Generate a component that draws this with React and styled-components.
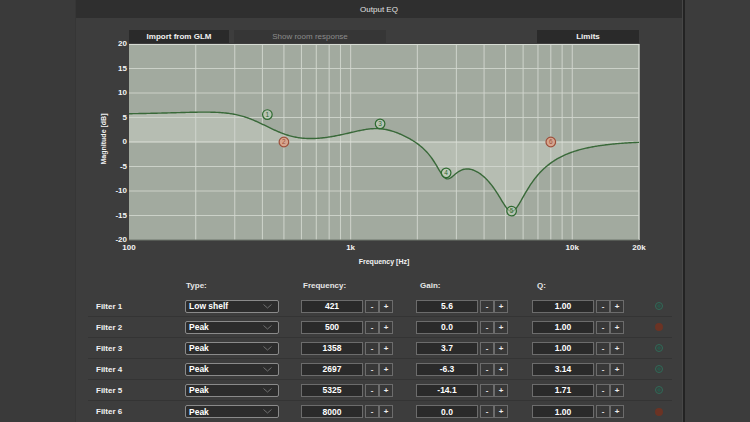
import React from 'react'
import styled, { createGlobalStyle } from 'styled-components'

const GlobalStyle = createGlobalStyle`
  html, body {
    margin: 0;
    padding: 0;
    background: #3b3b3b;
  }
  body {
    font-family: "Liberation Sans", Arial, sans-serif;
    -webkit-font-smoothing: antialiased;
  }
`

// plot geometry (svg coords, svg origin = window left / y 44)
const PX0 = 53
const PX1 = 563
const PY0 = 1
const PY1 = 197
const DECADE = (PX1 - PX0) / Math.log10(200)
const DB_PX = (PY1 - PY0) / 40
const FS = 48000

const filters = [
  { name: 'Filter 1', type: 'Low shelf', freq: 421, gain: 5.6, q: 1.0, on: true },
  { name: 'Filter 2', type: 'Peak', freq: 500, gain: 0.0, q: 1.0, on: false },
  { name: 'Filter 3', type: 'Peak', freq: 1358, gain: 3.7, q: 1.0, on: true },
  { name: 'Filter 4', type: 'Peak', freq: 2697, gain: -6.3, q: 3.14, on: true },
  { name: 'Filter 5', type: 'Peak', freq: 5325, gain: -14.1, q: 1.71, on: true },
  { name: 'Filter 6', type: 'Peak', freq: 8000, gain: 0.0, q: 1.0, on: false },
]

const xOf = (f) => PX0 + Math.log10(f / 100) * DECADE
const yOf = (db) => PY0 + (20 - db) * DB_PX

function coeffs(flt) {
  const A = Math.pow(10, flt.gain / 40)
  const w0 = (2 * Math.PI * flt.freq) / FS
  const cs = Math.cos(w0)
  const alpha = Math.sin(w0) / (2 * flt.q)
  if (flt.type === 'Low shelf') {
    const sa = 2 * Math.sqrt(A) * alpha
    return {
      b: [
        A * (A + 1 - (A - 1) * cs + sa),
        2 * A * (A - 1 - (A + 1) * cs),
        A * (A + 1 - (A - 1) * cs - sa),
      ],
      a: [A + 1 + (A - 1) * cs + sa, -2 * (A - 1 + (A + 1) * cs), A + 1 + (A - 1) * cs - sa],
    }
  }
  return {
    b: [1 + alpha * A, -2 * cs, 1 - alpha * A],
    a: [1 + alpha / A, -2 * cs, 1 - alpha / A],
  }
}

function magDb(c, f) {
  const w = (2 * Math.PI * f) / FS
  const ev = (k) => {
    const re = k[0] + k[1] * Math.cos(w) + k[2] * Math.cos(2 * w)
    const im = -(k[1] * Math.sin(w) + k[2] * Math.sin(2 * w))
    return Math.sqrt(re * re + im * im)
  }
  return 20 * Math.log10(ev(c.b) / ev(c.a))
}

function buildCurve() {
  const active = filters.filter((f) => f.on).map(coeffs)
  const pts = []
  for (let x = PX0; x <= PX1; x += 1) {
    const f = 100 * Math.pow(10, (x - PX0) / DECADE)
    const db = active.reduce((s, c) => s + magDb(c, f), 0)
    pts.push([x, yOf(db)])
  }
  return pts
}

const curve = buildCurve()
const linePath = curve.map((p, i) => `${i ? 'L' : 'M'}${p[0].toFixed(1)},${p[1].toFixed(2)}`).join(' ')
const fillPath = `${linePath} L${PX1},${yOf(0)} L${PX0},${yOf(0)} Z`

const vLines = []
;[100, 1000, 10000].forEach((d) => {
  for (let m = 1; m <= 9; m++) {
    const f = d * m
    if (f > 100 && f <= 20000) vLines.push(f)
  }
})
vLines.push(20000)

const Page = styled.div`
  display: flex;
  height: 422px;
  overflow: hidden;
`

const SidePane = styled.div`
  width: 75px;
  background: #3a3a3a;
  border-right: 1px solid #363636;
`

const RightPane = styled.div`
  flex: 1;
  background: #3c3c3c;
`

const Divider = styled.div`
  width: 1px;
  background: #474747;
  border-right: 2px solid #232323;
`

const Window = styled.div`
  width: 606px;
  display: flex;
  flex-direction: column;
  background: #3d3d3d;
`

const TitleBar = styled.div`
  height: 19px;
  background: #2f2f2f;
  color: #e2e2e2;
  font-size: 8px;
  display: flex;
  align-items: center;
  justify-content: center;
`

const ButtonBar = styled.div`
  display: flex;
  margin: 12px 0 0 53px;
  width: 510px;
  height: 13px;
`

const BarButton = styled.div`
  width: ${(p) => p.w}px;
  margin-left: ${(p) => p.ml || 0}px;
  background: ${(p) => (p.dim ? '#363636' : '#2a2a2a')};
  color: ${(p) => (p.dim ? '#8c8c8c' : '#f2f2f2')};
  font-size: 8px;
  font-weight: ${(p) => (p.dim ? 'normal' : 'bold')};
  display: flex;
  align-items: center;
  justify-content: center;
`

const Plot = styled.svg`
  display: block;
  overflow: visible;
  text {
    font-family: "Liberation Sans", Arial, sans-serif;
    font-size: 8px;
    font-weight: bold;
    fill: #f4f4f4;
  }
`

const HeadRow = styled.div`
  display: grid;
  grid-template-columns: 89px 116px 115px 116px;
  margin: 10px 0 0 12px;
  padding-left: 8px;
  height: 18px;
  align-items: start;
  padding-top: 2px;
  box-sizing: border-box;
  color: #e6e6e6;
  font-size: 8px;
  font-weight: bold;
`

const HeadCell = styled.div`
  grid-column: ${(p) => p.col};
  padding-left: ${(p) => p.pad}px;
`

const Row = styled.div`
  display: grid;
  grid-template-columns: 89px 116px 115px 116px 123px 10px;
  align-items: center;
  margin-left: 12px;
  width: 584px;
  padding-left: 8px;
  height: 21.6px;
  box-sizing: border-box;
  border-bottom: 1px solid #343434;
  &:last-child {
    border-bottom: none;
  }
`

const Label = styled.div`
  color: #f2f2f2;
  font-size: 8px;
  font-weight: bold;
`

const Select = styled.div`
  width: 94px;
  height: 13px;
  box-sizing: border-box;
  border: 1px solid #8a8a8a;
  border-radius: 2px;
  background: #2c2c2c;
  display: flex;
  align-items: center;
  justify-content: space-between;
  padding: 0 6px 0 3px;
  color: #fff;
  font-size: 8.5px;
  font-weight: bold;
`

const Group = styled.div`
  display: flex;
  align-items: center;
`

const Field = styled.div`
  width: 62px;
  height: 13px;
  box-sizing: border-box;
  border: 1px solid #6c6c6c;
  background: #2a2a2a;
  color: #fff;
  font-size: 8.5px;
  font-weight: bold;
  display: flex;
  align-items: center;
  justify-content: center;
  margin-right: 2px;
`

const Step = styled.div`
  width: 14px;
  height: 13px;
  box-sizing: border-box;
  border: 1px solid #6c6c6c;
  background: #383838;
  color: #f0f0f0;
  font-size: 8px;
  font-weight: bold;
  display: flex;
  align-items: center;
  justify-content: center;
`

const Dot = styled.div`
  width: 8px;
  height: 8px;
  border-radius: 50%;
  box-sizing: border-box;
  border: ${(p) => (p.on ? '1.5px solid #2f6b58' : 'none')};
  background: ${(p) => (p.on ? 'radial-gradient(circle, #2a5448 0 1.5px, transparent 2px)' : '#6b3324')};
`

const Chevron = () => (
  <svg width="9" height="5" viewBox="0 0 9 5">
    <path d="M0.5 0.5 L4.5 4 L8.5 0.5" fill="none" stroke="#6f6f6f" strokeWidth="1" />
  </svg>
)

function Chart() {
  const gridDb = [15, 10, 5, -5, -10, -15]
  return (
    <Plot width="606" height="226" viewBox="0 0 606 226">
      <rect x={PX0} y={PY0} width={PX1 - PX0} height={PY1 - PY0} fill="#a2aa9f" />
      <path d={fillPath} fill="#bcc3b8" opacity="0.75" />
      {vLines.map((f) => (
        <line key={f} x1={xOf(f)} x2={xOf(f)} y1={PY0} y2={PY1} stroke="#d3d8d0" strokeWidth="1.1" opacity="0.85" />
      ))}
      {gridDb.map((d) => (
        <line key={d} x1={PX0} x2={PX1} y1={yOf(d)} y2={yOf(d)} stroke="#d3d8d0" strokeWidth="1.1" opacity="0.85" />
      ))}
      <line x1={PX0} x2={PX1} y1={yOf(0)} y2={yOf(0)} stroke="#dde2da" strokeWidth="1.2" />
      <line x1={PX0} x2={PX1} y1={PY0 + 0.5} y2={PY0 + 0.5} stroke="#d6dbd3" strokeWidth="1" />
      <line x1={PX0} x2={PX1} y1={PY1} y2={PY1} stroke="#6f766c" strokeWidth="1" />
      <path d={linePath} fill="none" stroke="#396939" strokeWidth="1.4" />
      {filters.map((f, i) => {
        const cx = xOf(f.freq)
        const cy = yOf(f.gain)
        return (
          <g key={f.name}>
            <circle
              cx={cx}
              cy={cy}
              r="4.8"
              fill={f.on ? 'rgba(200,215,195,0.55)' : '#d7a58e'}
              stroke={f.on ? '#2e6a30' : '#9c4f3b'}
              strokeWidth="1.2"
            />
            <text
              x={cx}
              y={cy + 2.3}
              textAnchor="middle"
              style={{ fontSize: '6.5px', fontWeight: 'normal', fill: f.on ? '#2e6a30' : '#9c4f3b' }}
            >
              {i + 1}
            </text>
          </g>
        )
      })}
      {[20, 15, 10, 5, 0, -5, -10, -15, -20].map((d) => (
        <text key={d} x={PX0 - 2} y={yOf(d) + 2} textAnchor="end">
          {d}
        </text>
      ))}
      {[
        [100, '100'],
        [1000, '1k'],
        [10000, '10k'],
        [20000, '20k'],
      ].map(([f, t]) => (
        <text key={t} x={xOf(f)} y={207} textAnchor="middle">
          {t}
        </text>
      ))}
      <text x={308} y={221} textAnchor="middle" style={{ fontSize: '7px' }}>
        Frequency [Hz]
      </text>
      <text transform="translate(30,96) rotate(-90)" textAnchor="middle" style={{ fontSize: '7px' }}>
        Magnitude [dB]
      </text>
    </Plot>
  )
}

function NumberInput({ value }) {
  return (
    <Group>
      <Field>{value}</Field>
      <Step>-</Step>
      <Step>+</Step>
    </Group>
  )
}

export default function App() {
  return (
    <>
      <GlobalStyle />
      <Page>
        <SidePane />
        <Window>
          <TitleBar>Output EQ</TitleBar>
          <ButtonBar>
            <BarButton w={100}>Import from GLM</BarButton>
            <BarButton w={152} ml={5} dim>
              Show room response
            </BarButton>
            <BarButton w={102} ml={151}>
              Limits
            </BarButton>
          </ButtonBar>
          <Chart />
          <HeadRow>
            <HeadCell col={2} pad={1}>Type:</HeadCell>
            <HeadCell col={3} pad={2}>Frequency:</HeadCell>
            <HeadCell col={4} pad={4}>Gain:</HeadCell>
            <HeadCell col={5} pad={5}>Q:</HeadCell>
          </HeadRow>
          {filters.map((f) => (
            <Row key={f.name}>
              <Label>{f.name}</Label>
              <Select>
                <span>{f.type}</span>
                <Chevron />
              </Select>
              <NumberInput value={f.freq} />
              <NumberInput value={f.gain.toFixed(1)} />
              <NumberInput value={f.q.toFixed(2)} />
              <Dot on={f.on} />
            </Row>
          ))}
        </Window>
        <Divider />
        <RightPane />
      </Page>
    </>
  )
}
